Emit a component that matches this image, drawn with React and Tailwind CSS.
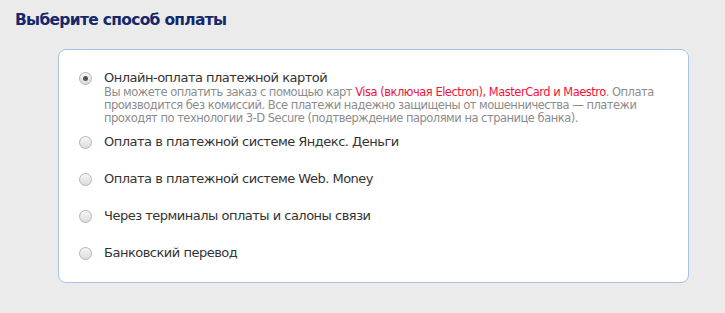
import React from "react";

function Radio({ checked }) {
  return (
    <span className="mt-[2px] flex h-[13px] w-[13px] shrink-0 items-center justify-center rounded-full border border-[#b5b5b5] bg-gradient-to-b from-[#f7f7f7] to-[#dcdcdc]">
      {checked && <span className="h-[5px] w-[5px] rounded-full bg-[#555]" />}
    </span>
  );
}

function Option({ checked, title, className = "", children }) {
  return (
    <div className={"flex items-start gap-[12px] " + className}>
      <Radio checked={checked} />
      <div>
        <div className="text-[13px] leading-[16px] tracking-[-0.5px] text-[#333]">{title}</div>
        {children}
      </div>
    </div>
  );
}

export default function App() {
  return (
    <div
      className="h-[313px] w-[725px] bg-[#ebebeb]"
      style={{ fontFamily: "Tahoma, 'DejaVu Sans', sans-serif" }}
    >
      <div className="px-[15px] pt-[10px] text-[15.5px] font-bold leading-[20px] tracking-[-0.7px] text-[#14286b]">
        Выберите способ оплаты
      </div>
      <div className="ml-[58px] mt-[19px] h-[234px] w-[631px] rounded-[8px] border border-[#a9c3de] bg-white pl-[20px] pt-[20px]">
        <div className="flex flex-col">
          <Option checked title="Онлайн-оплата платежной картой">
            <div className="whitespace-nowrap text-[11.5px] leading-[13px] tracking-[-0.5px] text-[#8c8c8c]">
              Вы можете оплатить заказ с помощью карт{" "}
              <span className="text-[#f0143c]">Visa (включая Electron), MasterCard и Maestro</span>. Оплата
              <br />
              производится без комиссий. Все платежи надежно защищены от мошенничества — платежи
              <br />
              проходят по технологии 3-D Secure (подтверждение паролями на странице банка).
            </div>
          </Option>
          <Option className="mt-[9px]" title="Оплата в платежной системе Яндекс. Деньги" />
          <Option className="mt-[21px]" title="Оплата в платежной системе Web. Money" />
          <Option className="mt-[21px]" title="Через терминалы оплаты и салоны связи" />
          <Option className="mt-[21px]" title="Банковский перевод" />
        </div>
      </div>
    </div>
  );
}
